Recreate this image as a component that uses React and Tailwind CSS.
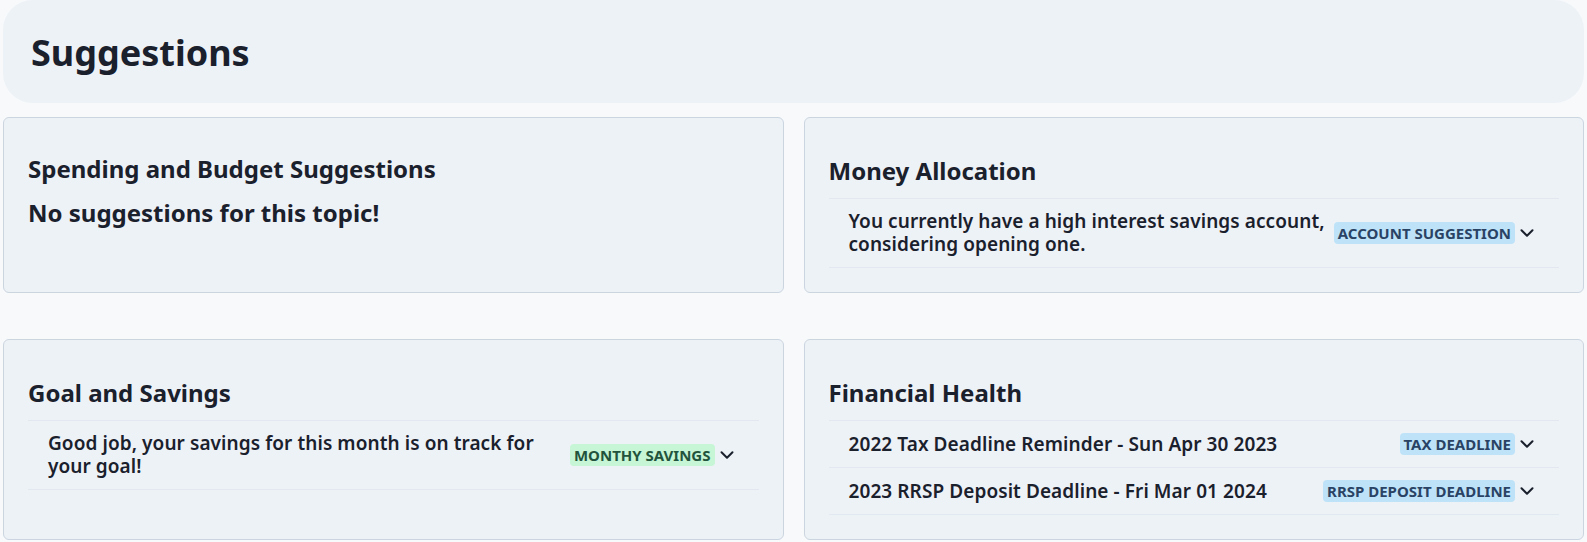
import React from 'react';
import { ChevronDown } from 'lucide-react';

const font = { fontFamily: '"Noto Sans", "Open Sans", sans-serif' };

const moneyRows = [
  { text: 'You currently have a high interest savings account, considering opening one.', tag: 'Account Suggestion', color: 'blue' },
];

const goalRows = [
  { text: 'Good job, your savings for this month is on track for your goal!', tag: 'Monthy Savings', color: 'green' },
];

const healthRows = [
  { text: '2022 Tax Deadline Reminder - Sun Apr 30 2023', tag: 'Tax Deadline', color: 'blue' },
  { text: '2023 RRSP Deposit Deadline - Fri Mar 01 2024', tag: 'RRSP Deposit Deadline', color: 'blue' },
];

function Badge({ label, color }) {
  const cls = color === 'green'
    ? 'bg-[#C6F6D5] text-[#22543D]'
    : 'bg-[#BEE3F8] text-[#2A4365]';
  return (
    <span className={`shrink-0 uppercase rounded-sm px-1 h-[22px] flex items-center text-[15px] font-bold leading-none ${cls}`}>
      {label}
    </span>
  );
}

function Row({ item }) {
  return (
    <div className="flex items-center gap-2 px-5 py-[11px] border-t border-[#E2E8F0] last:border-b">
      <p className="flex-1 text-left text-[19px] tracking-[0.08px] font-semibold leading-[23px] text-[#1A202C]">{item.text}</p>
      <div className="flex items-center">
        <Badge label={item.tag} color={item.color} />
        <span className="w-6 h-6 flex items-center justify-center">
          <ChevronDown size={22} strokeWidth={2.2} className="text-[#1A202C]" />
        </span>
      </div>
    </div>
  );
}

function Card({ title, rows }) {
  return (
    <div className="bg-[#EDF2F7] border border-[#CBD5E0] rounded-md px-6 pt-[38px] pb-6">
      <h2 className="text-[24px] font-bold leading-[29px] text-[#1A202C] mb-[13px]">{title}</h2>
      <div>
        {rows.map((r) => <Row key={r.text} item={r} />)}
      </div>
    </div>
  );
}

export default function App() {
  return (
    <div className="min-h-screen bg-[#F7F9FB] px-[3px]" style={font}>
      <div className="bg-[#EDF2F7] rounded-[30px] h-[103px] flex items-center px-[28px] pt-[2px]">
        <h1 className="text-[36px] font-bold text-[#1A202C] leading-none">Suggestions</h1>
      </div>

      <div className="grid grid-cols-2 gap-x-5 gap-y-[46px] mt-[14px]">
        <div className="bg-[#EDF2F7] border border-[#CBD5E0] rounded-md px-6 pt-[36px] pb-6">
          <h2 className="text-[24px] font-bold leading-[29px] text-[#1A202C]">Spending and Budget Suggestions</h2>
          <h2 className="text-[24px] font-bold leading-[29px] text-[#1A202C] mt-[15px]">No suggestions for this topic!</h2>
        </div>
        <Card title="Money Allocation" rows={moneyRows} />
        <Card title="Goal and Savings" rows={goalRows} />
        <Card title="Financial Health" rows={healthRows} />
      </div>
    </div>
  );
}
